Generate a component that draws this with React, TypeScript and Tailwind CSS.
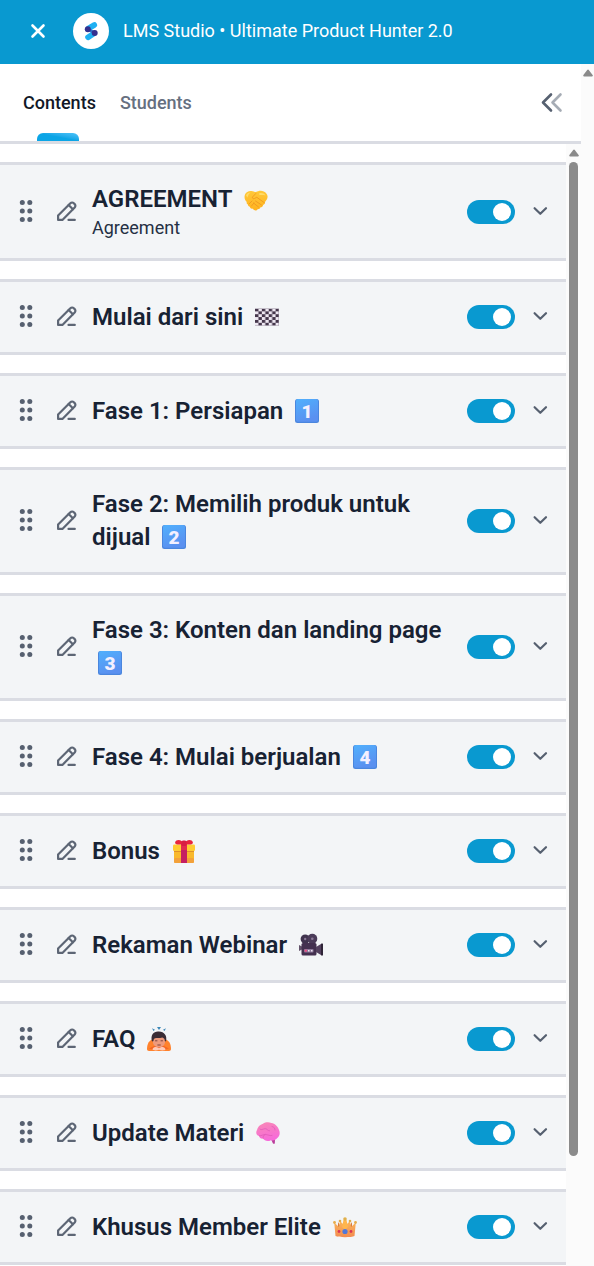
import { useState, type ReactNode } from "react";

/* ---------- Emoji ---------- */

const emojiClass = "inline-block size-6 ml-1.5 align-[-4px]";

function Handshake() {
  return (
    <svg viewBox="0 -2 24 24" className={emojiClass} role="img" aria-label="handshake">
      <defs>
        <linearGradient id="hand" x1="0" y1="0" x2="0" y2="1">
          <stop offset="0" stopColor="#ffc83a" />
          <stop offset="1" stopColor="#ffb31f" />
        </linearGradient>
      </defs>
      <path
        fill="url(#hand)"
        d="M1 5.500c1-2.500 4-4 6.500-3.500 1.500.3 3 1 4.500 1 1.500-.5 3-1.300 5-1.200C20 1.900 23 4 23.500 7c.4 2.500-1 4.500-2.500 6 .3 1.500-.7 2.700-1.900 2.900-.2 1.500-1.300 2.300-2.600 2.400-.5 1.500-1.700 2-2.900 1.900-.6 1.300-2.200 1.700-3.500.9l-1.800-1.500c-1.500.2-2.300-.8-2.400-1.900-1.300-.1-2-1-1.900-2.200-1.200-.3-1.700-1.500-1.200-2.600C.8 11.100-.1 8.300 1 5.500z"
      />
      <path
        fill="none"
        stroke="#ee9420"
        strokeWidth=".8"
        strokeLinecap="round"
        d="M11.800 4.500L8.500 8c-.6 1.200.8 2.100 2 1.500l2.300-1.200 7.500 5.400M11.500 12l6 4M9.500 14l5 4M5 15l3-3M7.500 17l2.500-3"
      />
      <path fill="#ffdc69" d="M2 6.500c.7-1.700 2.700-2.900 4.500-2.900C5 4.700 4 6.500 3.500 8.500zM15 4.500c2-1 5-.5 6.500 2-2-.8-4-.6-6-.4z" />
    </svg>
  );
}

function CheckeredFlag() {
  return (
    <svg viewBox="0 0 24 24" className={emojiClass} role="img" aria-label="finish flag">
      <defs>
        <pattern id="checks" width="6.860" height="5.720" patternUnits="userSpaceOnUse" y="3.500">
          <rect width="3.430" height="2.860" fill="#44364b" />
          <rect x="3.430" y="2.860" width="3.430" height="2.860" fill="#44364b" />
        </pattern>
      </defs>
      <rect y="3.500" width="24" height="17.200" fill="#eee8f2" />
      <rect y="3.500" width="24" height="17.200" fill="url(#checks)" />
    </svg>
  );
}

function Keycap({ digit }: { digit: string }) {
  const gradient = `keycap-${digit}`;

  return (
    <svg viewBox="0 0 24 24" className={emojiClass} role="img" aria-label={`keycap ${digit}`}>
      <defs>
        <linearGradient id={gradient} x1="0" y1="0" x2=".4" y2="1">
          <stop offset="0" stopColor="#50b0fd" />
          <stop offset="1" stopColor="#5a90f0" />
        </linearGradient>
      </defs>
      <rect width="24" height="24" rx="2.500" fill="#4a86de" />
      <rect x="1" width="22" height="22.800" rx="2" fill={`url(#${gradient})`} />
      <text
        x="12"
        y="18.500"
        textAnchor="middle"
        className="font-[Roboto,sans-serif] text-[19px] font-black"
        fill="#f3f0ff"
      >
        {digit}
      </text>
    </svg>
  );
}

function Gift() {
  return (
    <svg viewBox="0 0 24 24" className={emojiClass} role="img" aria-label="gift">
      <rect x="2" y="9" width="20" height="15" rx="1.500" fill="#f9b92c" />
      <rect x="2" y="19" width="20" height="5" rx="1.500" fill="#f3a13a" />
      <rect x="1" y="5.500" width="22" height="6.500" rx="1.200" fill="#ffcb32" />
      <path d="M2 12h20v1H2z" fill="#df9028" />
      <path d="M9 5h6v19H9z" fill="#c51f61" />
      <path d="M9 5h6v6H9z" fill="#e22c4e" />
      <path fill="#e8243d" d="M12 5C10 0 4 .200 3.200 3c-.5 1.600.7 2.500 2.300 2.500h13c1.600 0 2.800-.9 2.300-2.500C20 .200 14 0 12 5z" />
      <rect x="9.500" y="1.500" width="5" height="5.500" rx="1.500" fill="#d91d43" />
    </svg>
  );
}

function MovieCamera() {
  return (
    <svg viewBox="0 0 24 24" className={emojiClass} role="img" aria-label="movie camera">
      <circle cx="6.200" cy="6" r="4.600" fill="#40334e" />
      <circle cx="13.300" cy="5.700" r="5" fill="#4b3b59" />
      <circle cx="6.200" cy="6" r="1.200" fill="#8b7a98" />
      <circle cx="13.300" cy="5.700" r="1.300" fill="#8b7a98" />
      <path fill="#63536b" d="M0 12l3 1.500v3L0 18z" />
      <rect x="2.500" y="10" width="15" height="12.500" rx="1.500" fill="#443150" />
      <path fill="#54415f" d="M17 14l5-3v11l-5-3z" />
      <rect x="22" y="10.500" width="2" height="12" rx=".5" fill="#2e2437" />
      <rect x="5" y="16" width="9.500" height="3.500" rx=".8" fill="#8c7899" />
      <rect x="5.700" y="16.700" width="2.200" height="2" fill="#ef4e86" />
      <path d="M9 17h1.500v1.500H9zM12 17h1.500v1.500H12z" fill="#eee2f1" />
    </svg>
  );
}

function Bowing() {
  return (
    <svg viewBox="0 0 24 24" className={emojiClass} role="img" aria-label="person bowing">
      <path fill="#3b87b7" d="M5 1.200l3 1.600L6.500 4zM10 0h4l-2 3zM19 1.200l-3 1.600L17.500 4z" />
      <path fill="#ff822d" d="M0 22c0-5 2-9 6-9.500h12c4 .5 6 4.500 6 9.500 0 1.200-.8 2-2 2H2c-1.200 0-2-.8-2-2z" />
      <path fill="#f56625" d="M2 21.500l7-3.500h6l7 3.500-4 1H6z" />
      <ellipse cx="12" cy="14.500" rx="6.200" ry="6" fill="#ee9a7c" />
      <path fill="#3a2c35" d="M5 14.500C3.300 8 6.500 4.500 11 4.500c6-.5 9.500 4 8 10l-1.200-.5c.2-2-1-3-2.500-3.500-3 .8-5.500.3-7.300.8-1.300.7-1.500 1.700-1.500 2.700z" />
      <path stroke="#713b38" strokeWidth=".900" strokeLinecap="round" d="M8.500 13.800h1.500M14 13.800h1.500M10.800 18h2.500" />
      <path fill="#ffc9b6" d="M5.500 22.500c.5-2.500 3-3.500 6.500-1.300 3.500-2.200 6-1.200 6.500 1.300-1 1.300-4.500 1-6.500.3-2 .7-5.500 1-6.500-.3z" />
    </svg>
  );
}

function Brain() {
  return (
    <svg viewBox="0 0 24 24" className={emojiClass} role="img" aria-label="brain">
      <defs>
        <linearGradient id="brain" x1="0" y1="0" x2=".3" y2="1">
          <stop offset="0" stopColor="#f889b4" />
          <stop offset="1" stopColor="#f76bd9" />
        </linearGradient>
      </defs>
      <path fill="#b93d9a" d="M15 18h4l-.2 4.500c-1 .8-2 .2-2.300-1z" />
      <path
        fill="url(#brain)"
        d="M1 9C1.500 6 4 3.500 7 2.700c2.500-1.700 6-1.800 8.300-.7C19 2.500 22 5.500 23 9c1.300 2.500.8 6-1.700 8-1.500 2-4 2.800-6.300 2.200-3 1.500-6.500 1-8-1.600-1.700.4-3.600-.7-4-2.600C.3 14.500-.5 11.500 1 9z"
      />
      <path
        fill="none"
        stroke="#e05cb8"
        strokeWidth=".8"
        strokeLinecap="round"
        d="M3.500 14.800c2 .2 3.500-1.300 5.500-1.300 3 0 4 1.500 7 1M7.200 17.300c-.6-2 .6-3 1.800-3.800M4 8c1.500 2 4-1 6-.2 1.500.5 1.500 2 3.500 2M16 5.500c2.200.3 3.200 2 3 3.500"
      />
    </svg>
  );
}

function Crown() {
  return (
    <svg viewBox="0 0 24 24" className={emojiClass} role="img" aria-label="crown">
      <defs>
        <linearGradient id="crown" x1="0" y1="0" x2="0" y2="1">
          <stop offset="0" stopColor="#fbb75a" />
          <stop offset="1" stopColor="#f28b50" />
        </linearGradient>
      </defs>
      <path fill="#d87b3b" d="M5 7l3 5 4-5 4 5 3-5v8H5z" />
      <path
        fill="url(#crown)"
        d="M1.200 7.500L6 12l1-6 5 5 5-5 1 6 4.800-4.500L21.500 21c-3 1.600-16 1.600-19 0z"
      />
      <path fill="#ffb64d" d="M10.500 5h3l1.500 7-3 3-3-3z" />
      <circle cx="1.500" cy="7.500" r="1.400" fill="#e6ad4b" />
      <circle cx="7" cy="6" r="1.300" fill="#e0ac48" />
      <circle cx="12" cy="4" r="1.800" fill="#e0b04b" />
      <circle cx="17" cy="6" r="1.300" fill="#e0ac48" />
      <circle cx="22.500" cy="7.500" r="1.400" fill="#e6ad4b" />
      <circle cx="12" cy="16.500" r="2.600" fill="#4f78da" />
      <circle cx="6" cy="16.500" r="1.400" fill="#d93258" />
      <circle cx="18" cy="16.500" r="1.400" fill="#d93258" />
    </svg>
  );
}

/* ---------- Icons ---------- */

function Logo() {
  return (
    <svg viewBox="0 0 36 36" className="size-9 rounded-full bg-white" aria-hidden="true">
      <g strokeLinecap="round">
        <path d="M15.500 15.500l5.800-3.500" stroke="#1fb0f2" strokeWidth="5.600" />
        <path d="M15 24.300l6-4" stroke="#1fb0f2" strokeWidth="5.600" />
        <path d="M15 16l6.500 4" stroke="#2d6fc9" strokeWidth="3" />
      </g>
      <circle cx="14.800" cy="16.200" r="3" fill="#34308f" />
      <circle cx="21.700" cy="20" r="3" fill="#34308f" />
    </svg>
  );
}

function Grip() {
  return (
    <svg viewBox="0 0 16 24" className="h-6 w-4" fill="#566070" aria-hidden="true">
      <circle cx="4.300" cy="2.500" r="2.500" />
      <circle cx="11.800" cy="2.500" r="2.500" />
      <circle cx="4.300" cy="11" r="2.500" />
      <circle cx="11.800" cy="11" r="2.500" />
      <circle cx="4.300" cy="19.500" r="2.500" />
      <circle cx="11.800" cy="19.500" r="2.500" />
    </svg>
  );
}

function Pencil() {
  return (
    <svg
      viewBox="0 0 24 24"
      className="size-6"
      fill="none"
      stroke="#5d6675"
      strokeWidth="2.200"
      strokeLinecap="round"
      strokeLinejoin="round"
      aria-hidden="true"
    >
      <path d="M4.100 19.900v-4.400L16.400 3.200a2.400 2.400 0 0 1 3.400 0l.9.900a2.400 2.400 0 0 1 0 3.400L8.400 19.900z" />
      <path d="M14.600 5l4.300 4.300M14.500 19.900h6.300" />
    </svg>
  );
}

function ChevronDown() {
  return (
    <svg
      viewBox="0 0 16 16"
      className="size-4"
      fill="none"
      stroke="#566070"
      strokeWidth="2.200"
      strokeLinecap="round"
      strokeLinejoin="round"
      aria-hidden="true"
    >
      <path d="M2.600 4.200L8.300 9.800 14 4.200" />
    </svg>
  );
}

function ScrollArrow() {
  return (
    <svg viewBox="0 0 10 8" className="h-2 w-2.5" aria-hidden="true">
      <path d="M5 1.500L8.800 6.500H1.200z" fill="#8a8a8a" stroke="#8a8a8a" strokeWidth="2" strokeLinejoin="round" />
    </svg>
  );
}

/* ---------- Sections ---------- */

interface Section {
  title: string;
  subtitle?: string;
  emoji: ReactNode;
}

const sections: Section[] = [
  { title: "AGREEMENT", subtitle: "Agreement", emoji: <Handshake /> },
  { title: "Mulai dari sini", emoji: <CheckeredFlag /> },
  { title: "Fase 1: Persiapan", emoji: <Keycap digit="1" /> },
  { title: "Fase 2: Memilih produk untuk dijual", emoji: <Keycap digit="2" /> },
  { title: "Fase 3: Konten dan landing page", emoji: <Keycap digit="3" /> },
  { title: "Fase 4: Mulai berjualan", emoji: <Keycap digit="4" /> },
  { title: "Bonus", emoji: <Gift /> },
  { title: "Rekaman Webinar", emoji: <MovieCamera /> },
  { title: "FAQ", emoji: <Bowing /> },
  { title: "Update Materi", emoji: <Brain /> },
  { title: "Khusus Member Elite", emoji: <Crown /> },
];

function SectionRow({ title, subtitle, emoji }: Section) {
  const [visible, setVisible] = useState(true);

  return (
    <li className="flex min-h-[76px] items-center border-y-3 border-[#dadce3] bg-[#f3f5f7] px-[18px] py-[18px]">
      <button type="button" aria-label={`Move ${title}`} className="shrink-0 cursor-grab">
        <Grip />
      </button>
      <button type="button" aria-label={`Edit ${title}`} className="ml-5 shrink-0">
        <Pencil />
      </button>
      <div className="ml-3.5 min-w-0 flex-1">
        <h2 className="text-[24px] leading-[33px] font-semibold text-[#172233]">
          {title} {emoji}
        </h2>
        {subtitle && <p className="text-[18px] leading-[24px] text-[#253044]">{subtitle}</p>}
      </div>
      <input
        type="checkbox"
        role="switch"
        aria-label={`Show ${title}`}
        checked={visible}
        onChange={(e) => setVisible(e.target.checked)}
        className="ml-3 flex h-6 w-12 shrink-0 appearance-none items-center rounded-full bg-slate-300 px-1 before:size-[18px] before:rounded-full before:bg-white checked:bg-[#0999d0] checked:before:ml-auto"
      />
      <button type="button" aria-label={`Expand ${title}`} className="ml-[17px] shrink-0">
        <ChevronDown />
      </button>
    </li>
  );
}

export default function App() {
  return (
    <div className="flex h-screen flex-col overflow-hidden bg-white font-[Roboto,sans-serif]">
      {/* Top bar */}
      <header className="flex h-16 shrink-0 items-center bg-[#0999d0] pb-0.5 pl-[30px]">
        <button type="button" aria-label="Close">
          <svg viewBox="0 0 16 16" className="size-4" fill="none" stroke="#fff" strokeWidth="2.600" strokeLinecap="round" aria-hidden="true">
            <path d="M2.500 2.500l11 11M13.500 2.500l-11 11" />
          </svg>
        </button>
        <div className="ml-[27px] shrink-0">
          <Logo />
        </div>
        <h1 className="ml-3.5 truncate text-[18px] leading-[24px] text-white">
          LMS Studio • Ultimate Product Hunter 2.0
        </h1>
      </header>

      <div className="flex min-h-0 flex-1">
        <div className="flex min-w-0 flex-1 flex-col">
          {/* Tabs */}
          <nav className="flex h-20 shrink-0 items-stretch justify-between border-b-3 border-[#dadce3] pr-[18px] pl-[23px]">
            <div className="flex gap-6 text-[18px] leading-[24px] font-medium">
              <button type="button" className="relative text-[#111827]">
                Contents
                <span className="absolute bottom-0 left-3.5 h-2 w-[42px] rounded-t-md bg-linear-to-tr from-[#0ba5e6] from-50% to-[#4cc4fa]" />
              </button>
              <button type="button" className="text-[#667080]">
                Students
              </button>
            </div>
            <button type="button" aria-label="Collapse panel">
              <svg viewBox="0 0 24 24" className="size-6" fill="none" strokeWidth="2.600" strokeLinecap="round" strokeLinejoin="round" aria-hidden="true">
                <path d="M21.500 3.500L13.500 11.500l8 8" stroke="#a6acb5" />
                <path d="M12 3.500L4 11.500l8 8" stroke="#566070" />
              </svg>
            </button>
          </nav>

          <main className="flex min-h-0 flex-1 overflow-hidden">
            <ul className="flex min-w-0 flex-1 flex-col gap-[18px] self-start pt-[18px]">
              {sections.map((section) => (
                <SectionRow key={section.title} {...section} />
              ))}
            </ul>

            {/* List scrollbar */}
            <div className="flex w-[15px] flex-col items-center bg-[#fbfbfb] pt-[5px]" aria-hidden="true">
              <ScrollArrow />
              <div className="mt-[5px] w-[9px] flex-1">
                <div className="h-9/10 rounded-full bg-[#8b8b8b]" />
              </div>
            </div>
          </main>
        </div>

        {/* Page scrollbar */}
        <div className="flex w-[13px] flex-col items-center bg-[#fbfbfb] pt-[5px]" aria-hidden="true">
          <ScrollArrow />
        </div>
      </div>
    </div>
  );
}
